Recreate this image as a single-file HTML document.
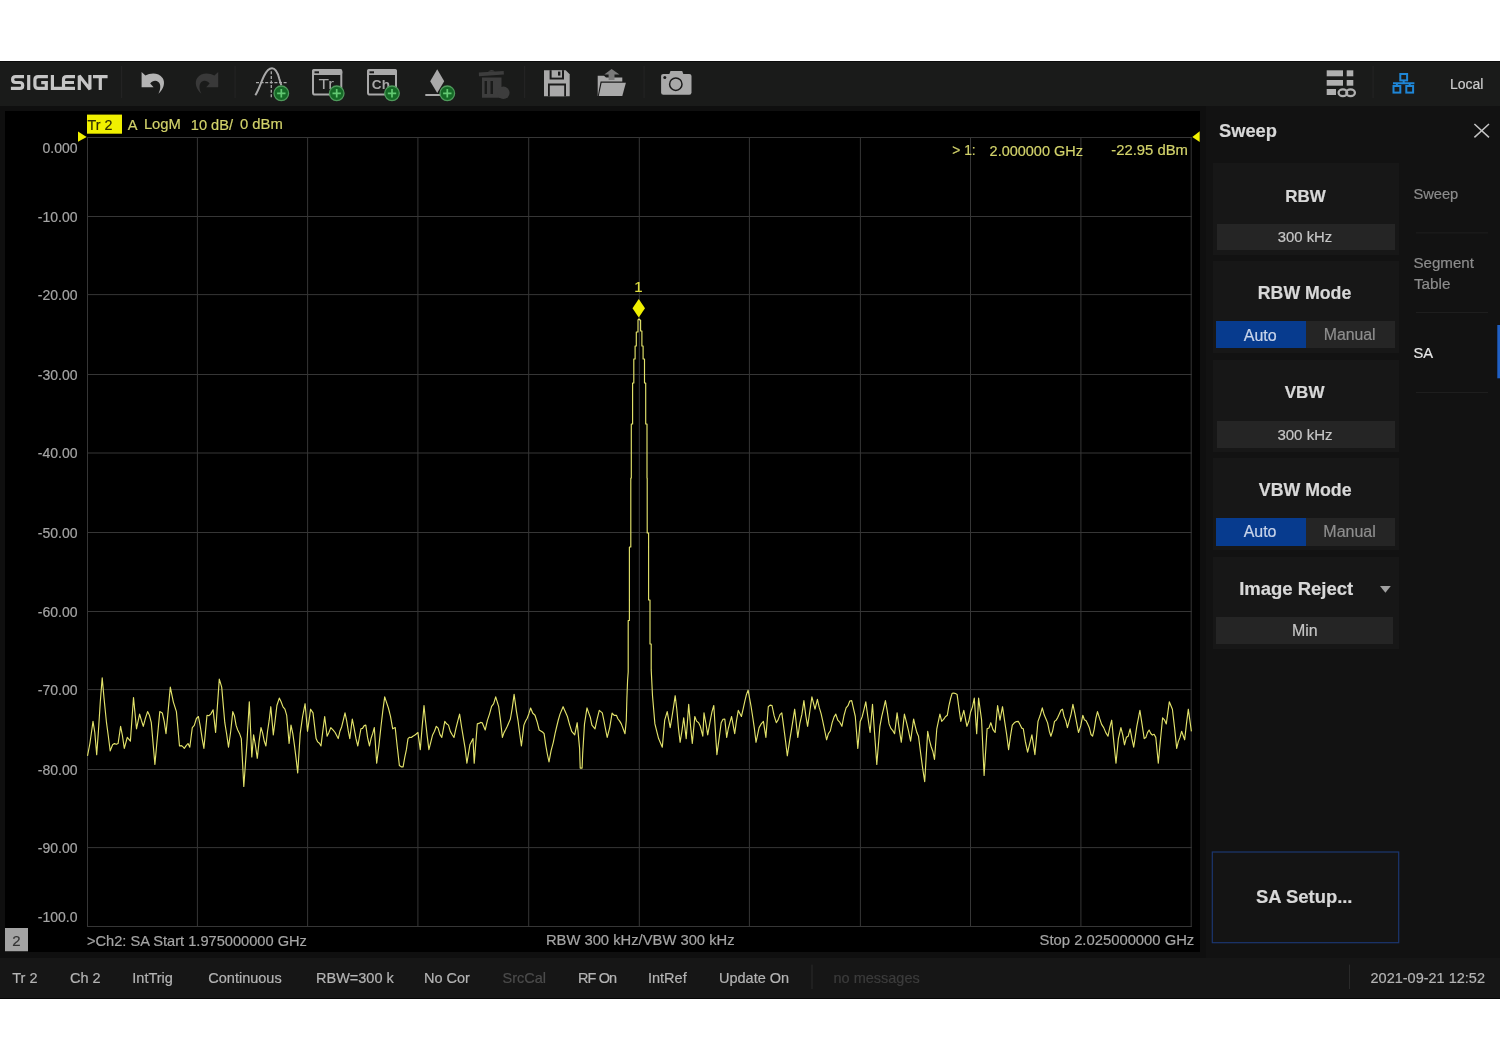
<!DOCTYPE html>
<html><head><meta charset="utf-8"><style>
html,body{margin:0;padding:0;background:#fff;width:1500px;height:1060px;overflow:hidden;position:relative}
.r{position:absolute}
.t{position:absolute;white-space:pre;font-family:"Liberation Sans",sans-serif;-webkit-text-stroke:0.2px currentColor}
svg{position:absolute;left:0;top:0;will-change:transform}
</style></head><body>
<div class="r" style="left:0px;top:61px;width:1500px;height:45px;background:#1a1b1a;"></div>
<div class="r" style="left:0px;top:106px;width:1500px;height:852px;background:#0f0f0f;"></div>
<div class="r" style="left:5px;top:111px;width:1195px;height:841px;background:#000;"></div>
<div class="r" style="left:1206px;top:106px;width:294px;height:852px;background:#121212;"></div>
<div class="r" style="left:0px;top:958px;width:1500px;height:40px;background:#161616;"></div>
<div class="r" style="left:0px;top:61px;width:1500px;height:1px;background:#0b0b0b;"></div>
<div class="r" style="left:0px;top:998px;width:1500px;height:1px;background:#060606;"></div>
<div class="r" style="left:1213px;top:163px;width:186px;height:92px;background:#171717;"></div>
<div class="r" style="left:1213px;top:261px;width:186px;height:92px;background:#171717;"></div>
<div class="r" style="left:1213px;top:359.5px;width:186px;height:92px;background:#171717;"></div>
<div class="r" style="left:1213px;top:458px;width:186px;height:92px;background:#171717;"></div>
<div class="r" style="left:1213px;top:556.6px;width:186px;height:92px;background:#171717;"></div>
<div class="r" style="left:1217px;top:224px;width:177.5px;height:25.5px;background:#252525;"></div>
<div class="r" style="left:1217px;top:421px;width:177.5px;height:27px;background:#252525;"></div>
<div class="r" style="left:1216.3px;top:617px;width:177.2px;height:27px;background:#252525;"></div>
<div class="r" style="left:1216.3px;top:320.6px;width:89.7px;height:27.7px;background:#073b8e;"></div>
<div class="r" style="left:1306px;top:320.6px;width:88.8px;height:27.7px;background:#252525;"></div>
<div class="r" style="left:1216.3px;top:518px;width:89.7px;height:27.7px;background:#073b8e;"></div>
<div class="r" style="left:1306px;top:518px;width:88.8px;height:27.7px;background:#252525;"></div>
<svg width="1500" height="1060" viewBox="0 0 1500 1060">
<rect x="121.0" y="66" width="1.2" height="32" fill="#232323"/>
<rect x="234.5" y="66" width="1.2" height="32" fill="#232323"/>
<rect x="524.0" y="66" width="1.2" height="32" fill="#232323"/>
<rect x="643.5" y="66" width="1.2" height="32" fill="#232323"/>
<rect x="1372.5" y="66" width="1.2" height="32" fill="#232323"/>
<g fill="none" stroke="#c6c6c6" stroke-width="3.2" stroke-linejoin="miter"><path d="M24,76.6 H15.6 Q12.6,76.6 12.6,79.6 Q12.6,82.5 15.6,82.5 H19.8 Q22.7,82.5 22.7,85.4 Q22.7,88.4 19.8,88.4 H10.9"/><path d="M28.7,75 V90"/><path d="M47.9,76.6 H38.2 Q34.9,76.6 34.9,79.8 V85.2 Q34.9,88.4 38.2,88.4 H46.3 V82.6 H41.2"/><path d="M52.4,75 V88.4 H75"/><path d="M75,76.6 H66.6 Q63.5,76.6 63.5,79.6 V88.4 M63.5,82.5 H74"/><path d="M79.3,90 V75.8 L89.9,89.2 V75" stroke-linejoin="bevel"/><path d="M93,76.6 H107.6 M100.3,76.6 V90"/></g>
<path d="M141.6,72 L145.4,75.6 C150.5,72.6 158.8,72.4 162.6,78 C165.6,82.6 163.6,89.4 158.4,93.8 C160.6,89.2 161.2,84.6 158.4,82 C155.8,79.8 152.4,80.6 150.2,83.4 L153.6,87.2 L141.6,87.2 Z" fill="#b4b4b4"/>
<g transform="translate(359.8,0) scale(-1,1)"><path d="M141.6,72 L145.4,75.6 C150.5,72.6 158.8,72.4 162.6,78 C165.6,82.6 163.6,89.4 158.4,93.8 C160.6,89.2 161.2,84.6 158.4,82 C155.8,79.8 152.4,80.6 150.2,83.4 L153.6,87.2 L141.6,87.2 Z" fill="#393939"/></g>
<path d="M255.3,95.3 C259,90 261,82 264,76 C267,70 270,68.3 272,68.3 C275,68.3 277.5,72 279.3,78.7 L281.3,85.3" fill="none" stroke="#a9a9a9" stroke-width="2"/>
<path d="M256,82.7 H287.3" stroke="#a9a9a9" stroke-width="1.3" stroke-dasharray="3,1.6"/>
<path d="M271.3,71.3 V98.7" stroke="#a9a9a9" stroke-width="1.3" stroke-dasharray="3,1.6"/>
<rect x="262" y="61" width="0" height="0"/>
<circle cx="281.3" cy="93.3" r="7.3" fill="#156a26" stroke="#4f9a5c" stroke-width="1.3"/><path d="M277.1,93.3 H285.5 M281.3,89.1 V97.5" stroke="#62c872" stroke-width="1.7"/>
<rect x="313" y="70" width="28.30000000000001" height="24.6" rx="2.2" fill="none" stroke="#a9a9a9" stroke-width="2"/><rect x="312" y="69" width="30.30000000000001" height="6" rx="2" fill="#a9a9a9"/><rect x="314.5" y="71.3" width="4.5" height="2" fill="#1a1a1a"/>
<text x="318.4" y="89.3" font-family="Liberation Sans" font-size="14.5" fill="#a9a9a9" textLength="15.6" lengthAdjust="spacingAndGlyphs">Tr</text>
<circle cx="336.7" cy="93.3" r="7.3" fill="#156a26" stroke="#4f9a5c" stroke-width="1.3"/><path d="M332.5,93.3 H340.9 M336.7,89.1 V97.5" stroke="#62c872" stroke-width="1.7"/>
<rect x="368" y="70" width="28" height="24.6" rx="2.2" fill="none" stroke="#a9a9a9" stroke-width="2"/><rect x="367" y="69" width="30" height="6" rx="2" fill="#a9a9a9"/><rect x="369.5" y="71.3" width="4.5" height="2" fill="#1a1a1a"/>
<text x="371.8" y="88.8" font-family="Liberation Sans" font-size="13.6" font-weight="700" fill="#a9a9a9" textLength="18.2" lengthAdjust="spacingAndGlyphs">Ch</text>
<circle cx="392" cy="93.3" r="7.3" fill="#156a26" stroke="#4f9a5c" stroke-width="1.3"/><path d="M387.8,93.3 H396.2 M392,89.1 V97.5" stroke="#62c872" stroke-width="1.7"/>
<path d="M437.2,69.3 L444.2,81.3 L437.2,93 L430.2,81.3 Z" fill="#a9a9a9"/>
<rect x="425.3" y="94" width="16" height="2" fill="#a9a9a9"/>
<circle cx="447.3" cy="93.3" r="7.3" fill="#156a26" stroke="#4f9a5c" stroke-width="1.3"/><path d="M443.1,93.3 H451.5 M447.3,89.1 V97.5" stroke="#62c872" stroke-width="1.7"/>
<path d="M478.8,72.6 L503.7,71 L503.9,74.6 L479,76.2 Z" fill="#3d3d3d"/>
<path d="M488,71.8 Q491.5,68.2 495,71.4 Z" fill="#3d3d3d"/>
<path d="M482,77.6 H501.5 V97.7 H482 Z M484.6,81 V94 H487 V81 Z M490.5,81 V94 H493 V81 Z" fill="#3d3d3d" fill-rule="evenodd"/>
<circle cx="503.4" cy="92.8" r="6.2" fill="#3d3d3d"/>
<path d="M544,70.2 H565.7 L569.7,74.2 V96.3 H544 Z" fill="#a9a9a9"/>
<rect x="549.6" y="70.2" width="14.4" height="9.3" fill="#1a1a1a"/>
<rect x="551.6" y="70.2" width="10.4" height="7.4" fill="#a9a9a9"/>
<rect x="558" y="71.6" width="2.4" height="4" fill="#1a1a1a"/>
<rect x="548" y="83.5" width="18" height="12.8" fill="#1a1a1a"/>
<rect x="549.8" y="85.5" width="14.4" height="10.8" fill="#a9a9a9"/>
<path d="M597.7,75.7 H604 L606,77.5 H622.3 V96 H597.7 Z" fill="#a9a9a9"/>
<path d="M600.6,81.6 H626.9 L623.3,97 H597.6 Z" fill="#1a1a1a"/>
<path d="M601.6,82.8 H625.9 L622.3,95.9 H598.8 Z" fill="#a9a9a9"/>
<path d="M604.3,74.6 L611.6,69.1 L619.5,74.6 H614.5 V80 H608.6 V74.6 Z" fill="#7a7a7a"/>
<rect x="661.1" y="73.9" width="30.4" height="20.9" rx="2.2" fill="#a9a9a9"/>
<path d="M669.2,74.5 L670.5,71 H682.2 L683.5,74.5 Z" fill="#a9a9a9"/>
<circle cx="664.8" cy="77.6" r="1.5" fill="#1a1a1a"/>
<circle cx="675.8" cy="84.2" r="6.2" fill="none" stroke="#1a1a1a" stroke-width="1.5"/>
<rect x="1326.7" y="70.3" width="16.3" height="6" fill="#b0b0b0"/><rect x="1346.7" y="70.3" width="6.6" height="6" fill="#b0b0b0"/>
<rect x="1326.7" y="80" width="16.3" height="5.7" fill="#b0b0b0"/><rect x="1346.7" y="80" width="6.6" height="5.7" fill="#b0b0b0"/>
<rect x="1326.7" y="89" width="9.3" height="6" fill="#b0b0b0"/>
<ellipse cx="1342.9" cy="92.7" rx="4.3" ry="3.4" fill="none" stroke="#b0b0b0" stroke-width="2.3"/>
<ellipse cx="1350.6" cy="92.7" rx="4.3" ry="3.4" fill="none" stroke="#b0b0b0" stroke-width="2.3"/>
<g fill="none" stroke="#1f86d6" stroke-width="2"><rect x="1400.3" y="74" width="6.8" height="6.4"/><path d="M1403.7,80.4 V83.2 M1393,83.2 H1414.4"/><rect x="1393.5" y="86" width="6.8" height="6.6"/><rect x="1406.3" y="86" width="6.8" height="6.6"/></g>
<path d="M1396.9,83.2 V86 M1409.7,83.2 V86" stroke="#1f86d6" stroke-width="2"/>
<path d="M87.50,137.0 V927.0 M197.40,137.0 V927.0 M307.60,137.0 V927.0 M417.90,137.0 V927.0 M528.70,137.0 V927.0 M639.30,137.0 V927.0 M749.40,137.0 V927.0 M860.40,137.0 V927.0 M970.50,137.0 V927.0 M1080.90,137.0 V927.0 M1191.20,137.0 V927.0 M87.0,137.5 H1191.7 M87.0,216.5 H1191.7 M87.0,294.6 H1191.7 M87.0,374.5 H1191.7 M87.0,453 H1191.7 M87.0,532.5 H1191.7 M87.0,611.5 H1191.7 M87.0,689.6 H1191.7 M87.0,769.5 H1191.7 M87.0,847.6 H1191.7 M87.0,926.5 H1191.7" stroke="#363636" stroke-width="1" fill="none"/>
<path d="M87.5,755.8 L89.9,743.5 L93.0,721.4 L94.8,732.5 L96.7,754.6 L98.5,730.0 L100.3,701.8 L102.2,677.9 L104.0,698.0 L106.5,722.7 L108.3,736.0 L110.2,750.9 L112.6,744.8 L114.4,743.6 L116.3,744.3 L118.1,743.5 L120.6,726.3 L122.4,735.5 L124.3,748.4 L127.3,737.4 L130.4,741.1 L133.5,697.5 L136.5,728.8 L139.6,714.1 L141.4,720.4 L143.3,726.3 L145.4,718.4 L147.6,711.6 L149.4,715.2 L151.3,722.7 L153.1,743.6 L154.9,764.4 L156.8,743.5 L159.8,711.6 L162.3,712.9 L164.2,721.3 L166.0,733.7 L168.2,710.1 L170.3,687.1 L173.3,701.8 L176.4,711.6 L179.5,746.0 L181.1,745.6 L182.7,746.5 L184.3,748.4 L186.2,745.6 L188.0,743.5 L189.8,747.2 L192.3,727.6 L194.3,725.3 L196.4,718.5 L198.4,716.5 L200.2,725.9 L202.1,738.3 L203.9,748.4 L207.0,715.3 L208.8,715.7 L210.7,714.1 L213.1,709.8 L215.6,732.5 L217.4,706.1 L219.3,679.1 L221.7,687.1 L224.8,722.7 L226.7,734.5 L228.5,747.2 L230.7,731.5 L232.8,711.6 L234.4,715.7 L236.1,725.4 L237.7,730.0 L239.5,733.4 L241.3,738.6 L243.8,786.5 L246.9,743.5 L249.3,701.8 L251.8,757.0 L253.6,734.9 L255.4,745.0 L257.3,758.3 L259.1,741.3 L261.0,727.6 L262.6,732.9 L264.3,741.3 L265.9,746.0 L267.5,731.5 L269.2,720.2 L270.8,706.7 L273.3,734.9 L275.1,720.8 L276.9,705.5 L279.3,698.1 L281.1,701.8 L283.0,706.9 L284.9,709.1 L286.7,715.3 L289.1,743.5 L291.0,725.1 L292.8,733.7 L294.4,744.9 L296.1,758.6 L297.7,773.0 L300.2,733.7 L302.6,716.5 L305.1,703.7 L307.5,731.3 L310.6,709.2 L313.0,712.9 L316.1,738.6 L317.7,741.9 L319.4,743.2 L321.0,746.0 L322.9,730.4 L324.7,716.5 L327.1,736.2 L329.0,732.3 L330.8,727.6 L333.0,729.9 L335.1,732.5 L338.2,738.6 L339.9,731.3 L341.6,727.0 L343.3,720.2 L345.0,712.9 L346.6,720.3 L348.2,730.4 L349.8,738.6 L352.3,719.0 L354.1,728.1 L356.0,738.7 L357.8,746.0 L360.9,728.8 L362.5,728.4 L364.2,725.6 L365.8,725.1 L367.6,737.7 L369.5,746.0 L371.1,738.2 L372.7,733.4 L374.3,727.6 L376.7,763.2 L378.9,745.9 L381.0,726.3 L382.9,710.1 L384.7,696.9 L386.5,702.4 L388.4,708.0 L390.5,716.4 L392.7,728.8 L395.2,727.6 L397.3,747.3 L399.4,765.6 L401.2,766.8 L403.1,766.8 L404.7,757.7 L406.4,749.7 L408.0,738.6 L409.6,737.3 L411.3,737.5 L412.9,736.2 L414.6,735.3 L416.2,734.0 L417.9,732.5 L420.3,749.7 L422.1,727.4 L424.0,705.5 L425.6,721.7 L427.3,736.9 L428.9,749.7 L430.8,742.2 L432.6,734.9 L434.5,731.3 L436.3,726.3 L438.1,728.1 L440.0,734.6 L441.8,737.4 L444.8,721.4 L446.6,723.8 L448.5,725.1 L450.3,731.4 L452.2,734.7 L454.0,737.4 L455.9,728.7 L457.7,721.4 L459.6,714.1 L461.5,726.5 L463.3,737.4 L465.1,748.2 L466.9,763.2 L469.9,744.8 L473.0,738.6 L474.2,763.2 L477.3,723.9 L478.9,723.4 L480.6,722.4 L482.2,722.7 L485.2,730.0 L487.4,720.4 L489.5,714.1 L491.6,706.4 L493.6,703.8 L495.7,696.9 L498.7,706.7 L500.5,720.4 L502.4,737.4 L504.0,732.6 L505.7,729.5 L507.3,726.3 L510.4,719.0 L512.2,708.3 L514.1,694.4 L516.5,711.6 L518.1,721.2 L519.8,734.3 L521.4,746.0 L523.9,725.1 L525.6,721.0 L527.2,718.2 L528.9,713.7 L530.6,708.0 L532.8,713.3 L535.0,715.3 L537.1,721.7 L539.2,730.0 L540.8,730.9 L542.5,732.0 L544.1,733.7 L545.7,744.8 L547.4,754.5 L549.0,761.9 L551.1,750.6 L553.3,742.3 L555.0,733.8 L556.6,727.0 L558.3,720.0 L560.0,714.1 L563.1,706.7 L565.2,711.5 L567.4,716.5 L569.5,724.3 L571.7,731.3 L574.7,734.9 L577.2,722.7 L579.6,748.4 L580.2,768.1 L582.1,768.1 L582.7,753.3 L584.5,723.9 L587.0,707.9 L588.6,712.6 L590.3,717.2 L591.9,725.1 L595.0,728.8 L597.1,719.2 L599.3,710.4 L602.3,712.9 L603.9,720.5 L605.6,729.5 L607.2,737.4 L609.7,727.6 L612.1,713.1 L614.2,715.4 L616.4,715.3 L618.0,719.0 L619.7,721.1 L621.3,723.9 L625.0,733.7 L626.3,720.2 L626.9,698.1 L627.6,680.0 L628.2,672.0 L628.2,620.5 L629.4,620.5 L629.4,547.0 L630.8,547.0 L630.8,478.0 L631.3,478.0 L631.3,424.0 L632.6,424.0 L632.6,383.0 L633.8,383.0 L633.8,359.0 L635.1,359.0 L635.1,346.0 L636.3,346.0 L636.3,332.0 L638.0,332.0 L638.0,320.0 L638.9,319.0 L639.8,320.0 L640.6,320.0 L640.6,331.0 L641.9,331.0 L641.9,346.0 L643.1,346.0 L643.1,359.0 L644.5,359.0 L644.5,383.0 L645.7,383.0 L645.7,424.0 L647.0,424.0 L647.0,478.0 L647.2,478.0 L647.2,533.0 L648.6,533.0 L648.6,600.0 L650.0,600.0 L650.0,644.0 L651.2,644.0 L651.2,669.9 L652.5,695.7 L654.9,723.9 L658.6,738.6 L662.3,747.2 L664.7,720.2 L667.2,711.6 L670.2,727.6 L671.9,717.5 L673.5,707.1 L675.2,695.7 L676.8,709.3 L678.5,728.5 L680.1,742.3 L681.9,731.3 L683.7,717.8 L686.2,738.6 L688.7,704.3 L690.5,725.5 L692.3,743.5 L694.8,716.5 L696.6,721.1 L698.5,722.6 L700.3,726.3 L702.8,736.2 L704.0,712.9 L705.9,723.5 L707.7,734.9 L710.1,721.4 L712.0,711.7 L713.8,705.5 L716.9,754.6 L719.0,739.2 L721.2,722.7 L723.0,719.3 L724.8,719.0 L726.7,737.4 L728.3,728.5 L730.0,722.2 L731.6,716.5 L734.7,733.7 L736.5,720.6 L738.3,710.4 L741.4,716.5 L743.1,709.2 L744.8,701.4 L746.4,694.6 L748.1,690.2 L751.1,706.7 L752.7,717.0 L754.4,728.7 L756.0,742.3 L759.1,727.6 L761.2,723.9 L763.4,721.4 L765.9,737.4 L768.3,706.7 L770.1,705.1 L772.0,705.5 L774.1,715.7 L776.3,722.7 L778.1,719.9 L780.0,714.6 L781.8,712.9 L783.6,726.1 L785.5,740.8 L787.3,755.8 L789.5,741.7 L791.6,728.8 L794.7,709.2 L797.8,737.4 L799.8,723.5 L801.9,714.4 L803.9,700.6 L805.8,715.6 L807.6,726.3 L809.8,711.5 L811.9,696.9 L815.0,709.2 L817.4,699.4 L819.2,707.4 L821.1,713.7 L822.9,721.9 L824.8,731.0 L826.6,739.8 L828.4,733.6 L830.3,731.0 L832.1,722.9 L834.0,717.1 L835.8,714.1 L837.8,720.2 L839.9,722.4 L841.9,726.3 L844.0,715.5 L846.1,707.9 L848.0,705.7 L849.8,701.0 L851.7,700.6 L853.5,708.7 L855.3,716.5 L857.8,748.4 L860.2,721.4 L862.1,717.0 L863.9,709.9 L865.8,701.8 L868.0,718.0 L870.1,732.5 L872.5,704.3 L876.8,764.4 L879.9,726.3 L881.7,716.7 L883.6,708.6 L885.4,700.6 L887.2,710.8 L889.1,723.9 L890.9,728.4 L892.8,730.6 L894.6,733.7 L897.1,712.9 L899.2,728.8 L901.3,742.3 L904.4,714.1 L906.5,722.4 L908.5,730.9 L910.6,741.1 L913.6,719.0 L915.2,726.1 L916.9,732.6 L918.5,736.2 L920.6,752.9 L922.6,767.8 L924.7,781.6 L927.7,731.3 L929.4,739.8 L931.1,746.5 L932.8,751.2 L934.5,759.5 L936.8,728.8 L939.9,714.1 L941.7,721.4 L943.6,719.4 L945.4,716.7 L947.3,715.3 L948.9,705.9 L950.6,698.5 L952.2,693.2 L953.8,693.1 L955.5,693.5 L957.1,694.4 L959.0,708.7 L960.8,721.4 L963.8,710.4 L966.9,726.3 L968.8,721.3 L970.6,712.0 L972.4,707.1 L974.3,698.1 L976.7,733.7 L978.6,698.1 L981.6,720.2 L984.1,775.4 L987.1,728.8 L989.0,727.9 L990.8,722.7 L993.0,729.6 L995.1,732.5 L997.6,705.5 L1000.0,720.2 L1002.5,706.7 L1004.5,720.4 L1006.6,734.1 L1008.6,749.7 L1010.5,736.2 L1012.3,725.1 L1014.3,722.8 L1016.4,721.6 L1018.4,721.4 L1020.0,724.4 L1021.7,728.1 L1023.3,728.8 L1025.4,741.9 L1027.6,752.1 L1029.8,743.4 L1031.9,734.9 L1034.9,754.6 L1038.0,721.4 L1040.2,715.3 L1042.3,707.9 L1044.2,714.8 L1046.0,719.0 L1047.6,722.9 L1049.3,731.2 L1050.9,736.2 L1052.7,730.6 L1054.5,721.4 L1056.1,720.2 L1057.7,717.6 L1059.3,714.0 L1060.9,710.2 L1062.5,709.2 L1064.1,716.6 L1065.8,720.7 L1067.4,727.6 L1069.2,721.2 L1071.1,714.1 L1072.9,704.3 L1074.8,713.2 L1076.6,722.7 L1078.5,732.5 L1080.7,725.9 L1082.8,715.3 L1084.4,719.8 L1086.1,720.8 L1087.7,724.1 L1089.3,727.7 L1091.0,734.5 L1092.6,736.2 L1094.2,729.3 L1095.9,718.2 L1097.5,711.6 L1099.6,718.4 L1101.6,724.4 L1103.7,727.6 L1105.8,732.6 L1108.0,736.2 L1109.8,727.5 L1111.7,720.2 L1113.8,741.9 L1116.0,763.2 L1118.4,738.6 L1120.9,727.6 L1122.7,734.6 L1124.5,744.8 L1126.4,737.3 L1128.2,736.2 L1130.1,728.8 L1131.9,738.7 L1133.7,747.2 L1136.8,726.3 L1139.9,710.4 L1142.1,724.6 L1144.2,738.6 L1145.8,737.6 L1147.5,732.6 L1149.1,730.0 L1150.8,733.5 L1152.4,735.1 L1154.1,734.3 L1155.8,737.4 L1158.3,763.2 L1160.1,743.5 L1162.6,717.8 L1164.4,719.8 L1166.3,723.9 L1169.3,701.8 L1172.4,709.2 L1174.6,727.9 L1176.7,748.4 L1178.3,741.6 L1180.0,737.4 L1181.6,731.3 L1184.7,739.8 L1186.5,723.4 L1188.3,709.2 L1191.4,731.3" fill="none" stroke="#e2e26a" stroke-width="1.15" stroke-linejoin="round"/>
<path d="M78,131.5 L86.7,137 L78,141.7 Z" fill="#f0f000"/>
<path d="M1199.7,131.3 L1192.3,137 L1199.7,142 Z" fill="#f0f000"/>
<path d="M638.75,299 L645,308.2 L638.75,317.4 L632.5,308.2 Z" fill="#f0f000"/>
<rect x="87" y="114.6" width="35" height="19.1" fill="#f0f000"/>
<rect x="5" y="928" width="23" height="23.3" fill="#a3a3a3"/>
<path d="M1474.4,124 L1489,137.4 M1489,124 L1474.4,137.4" stroke="#c4c4c4" stroke-width="1.5"/>
<path d="M1380,586 H1390.8 L1385.4,592.8 Z" fill="#a0a0a0"/>
<rect x="811.5" y="964.6" width="1" height="24.4" fill="#2a2a2a"/>
<rect x="1349" y="964.6" width="1" height="24.4" fill="#2a2a2a"/>
<rect x="1416" y="232.4" width="72" height="1" fill="#1e1e1e"/>
<rect x="1416" y="312" width="72" height="1" fill="#1e1e1e"/>
<rect x="1416" y="392" width="72" height="1" fill="#1e1e1e"/>
<rect x="1497.3" y="325" width="2.7" height="53.3" fill="#1f5fc4"/>
<rect x="1212.3" y="852" width="186.4" height="90.7" fill="#141414" stroke="#1c3770" stroke-width="1.2"/>
</svg>
<div id="tl" style="position:absolute;left:0;top:0;width:1500px;height:1060px;will-change:transform"><div class="t" style="left:1450.00px;top:77.35px;font-size:14.000px;line-height:14.000px;color:#cccccc;font-weight:400;">Local</div>
<div class="t" style="left:42.47px;top:140.65px;font-size:14.000px;line-height:14.000px;color:#a4a4a4;font-weight:400;">0.000</div>
<div class="t" style="left:37.81px;top:209.55px;font-size:14.000px;line-height:14.000px;color:#a4a4a4;font-weight:400;">-10.00</div>
<div class="t" style="left:37.81px;top:287.65px;font-size:14.000px;line-height:14.000px;color:#a4a4a4;font-weight:400;">-20.00</div>
<div class="t" style="left:37.81px;top:367.55px;font-size:14.000px;line-height:14.000px;color:#a4a4a4;font-weight:400;">-30.00</div>
<div class="t" style="left:37.81px;top:446.05px;font-size:14.000px;line-height:14.000px;color:#a4a4a4;font-weight:400;">-40.00</div>
<div class="t" style="left:37.81px;top:525.55px;font-size:14.000px;line-height:14.000px;color:#a4a4a4;font-weight:400;">-50.00</div>
<div class="t" style="left:37.81px;top:604.55px;font-size:14.000px;line-height:14.000px;color:#a4a4a4;font-weight:400;">-60.00</div>
<div class="t" style="left:37.81px;top:682.65px;font-size:14.000px;line-height:14.000px;color:#a4a4a4;font-weight:400;">-70.00</div>
<div class="t" style="left:37.81px;top:762.55px;font-size:14.000px;line-height:14.000px;color:#a4a4a4;font-weight:400;">-80.00</div>
<div class="t" style="left:37.81px;top:840.65px;font-size:14.000px;line-height:14.000px;color:#a4a4a4;font-weight:400;">-90.00</div>
<div class="t" style="left:37.81px;top:910.15px;font-size:14.000px;line-height:14.000px;color:#a4a4a4;font-weight:400;">-100.0</div>
<div class="t" style="left:87.50px;top:117.89px;font-size:14.302px;line-height:14.302px;color:#2e2e00;font-weight:400;">Tr 2</div>
<div class="t" style="left:127.80px;top:117.64px;font-size:14.600px;line-height:14.600px;color:#d2d26a;font-weight:400;">A</div>
<div class="t" style="left:143.90px;top:117.47px;font-size:14.800px;line-height:14.800px;color:#d2d26a;font-weight:400;">LogM</div>
<div class="t" style="left:190.80px;top:117.64px;font-size:14.600px;line-height:14.600px;color:#d2d26a;font-weight:400;">10 dB/</div>
<div class="t" style="left:240.00px;top:117.47px;font-size:14.800px;line-height:14.800px;color:#d2d26a;font-weight:400;">0 dBm</div>
<div class="t" style="left:952.30px;top:144.22px;font-size:13.797px;line-height:13.797px;color:#d2d26a;font-weight:400;">&gt; 1:</div>
<div class="t" style="left:989.60px;top:143.64px;font-size:14.483px;line-height:14.483px;color:#d2d26a;font-weight:400;">2.000000 GHz</div>
<div class="t" style="left:1111.20px;top:143.32px;font-size:14.858px;line-height:14.858px;color:#d2d26a;font-weight:400;">-22.95 dBm</div>
<div class="t" style="left:634.33px;top:279.00px;font-size:15.000px;line-height:15.000px;color:#dede40;font-weight:400;">1</div>
<div class="t" style="left:87.00px;top:933.62px;font-size:14.630px;line-height:14.630px;color:#a4a4a4;font-weight:400;">&gt;Ch2: SA Start 1.975000000 GHz</div>
<div class="t" style="left:545.90px;top:933.49px;font-size:14.780px;line-height:14.780px;color:#a4a4a4;font-weight:400;">RBW 300 kHz/VBW 300 kHz</div>
<div class="t" style="left:1039.60px;top:933.07px;font-size:14.801px;line-height:14.801px;color:#a4a4a4;font-weight:400;">Stop 2.025000000 GHz</div>
<div class="t" style="left:12.33px;top:933.30px;font-size:15.000px;line-height:15.000px;color:#333333;font-weight:400;">2</div>
<div class="t" style="left:12.30px;top:971.03px;font-size:14.500px;line-height:14.500px;color:#b4b4b4;font-weight:400;">Tr 2</div>
<div class="t" style="left:70.00px;top:971.03px;font-size:14.500px;line-height:14.500px;color:#b4b4b4;font-weight:400;">Ch 2</div>
<div class="t" style="left:132.30px;top:971.03px;font-size:14.500px;line-height:14.500px;color:#b4b4b4;font-weight:400;">IntTrig</div>
<div class="t" style="left:208.30px;top:971.03px;font-size:14.500px;line-height:14.500px;color:#b4b4b4;font-weight:400;">Continuous</div>
<div class="t" style="left:316.00px;top:971.03px;font-size:14.500px;line-height:14.500px;color:#b4b4b4;font-weight:400;">RBW=300 k</div>
<div class="t" style="left:424.00px;top:971.03px;font-size:14.500px;line-height:14.500px;color:#b4b4b4;font-weight:400;">No Cor</div>
<div class="t" style="left:502.50px;top:971.03px;font-size:14.500px;line-height:14.500px;color:#4c4c4c;font-weight:400;">SrcCal</div>
<div class="t" style="left:578.00px;top:971.03px;font-size:14.500px;line-height:14.500px;color:#b4b4b4;font-weight:400;letter-spacing:-0.9px;">RF On</div>
<div class="t" style="left:648.00px;top:971.03px;font-size:14.500px;line-height:14.500px;color:#b4b4b4;font-weight:400;">IntRef</div>
<div class="t" style="left:719.00px;top:971.03px;font-size:14.500px;line-height:14.500px;color:#b4b4b4;font-weight:400;">Update On</div>
<div class="t" style="left:833.50px;top:971.03px;font-size:14.500px;line-height:14.500px;color:#3c3c3c;font-weight:400;">no messages</div>
<div class="t" style="left:1370.50px;top:971.03px;font-size:14.500px;line-height:14.500px;color:#b4b4b4;font-weight:400;">2021-09-21 12:52</div>
<div class="t" style="left:1219.00px;top:121.50px;font-size:18.308px;line-height:18.308px;color:#d8d8d8;font-weight:700;">Sweep</div>
<div class="t" style="left:1285.20px;top:187.61px;font-size:17.000px;line-height:17.000px;color:#d8d8d8;font-weight:700;">RBW</div>
<div class="t" style="left:1277.75px;top:229.92px;font-size:14.858px;line-height:14.858px;color:#c6c6c6;font-weight:400;">300 kHz</div>
<div class="t" style="left:1257.80px;top:284.79px;font-size:17.737px;line-height:17.737px;color:#d8d8d8;font-weight:700;">RBW Mode</div>
<div class="t" style="left:1243.70px;top:327.02px;font-size:16.043px;line-height:16.043px;color:#c8d4ea;font-weight:400;">Auto</div>
<div class="t" style="left:1323.75px;top:327.21px;font-size:15.823px;line-height:15.823px;color:#8e8e8e;font-weight:400;">Manual</div>
<div class="t" style="left:1284.77px;top:384.31px;font-size:17.000px;line-height:17.000px;color:#d8d8d8;font-weight:700;">VBW</div>
<div class="t" style="left:1277.40px;top:426.96px;font-size:15.049px;line-height:15.049px;color:#c6c6c6;font-weight:400;">300 kHz</div>
<div class="t" style="left:1258.85px;top:481.87px;font-size:17.752px;line-height:17.752px;color:#d8d8d8;font-weight:700;">VBW Mode</div>
<div class="t" style="left:1243.70px;top:524.30px;font-size:15.946px;line-height:15.946px;color:#c8d4ea;font-weight:400;">Auto</div>
<div class="t" style="left:1323.35px;top:524.25px;font-size:16.006px;line-height:16.006px;color:#8e8e8e;font-weight:400;">Manual</div>
<div class="t" style="left:1239.20px;top:580.34px;font-size:18.496px;line-height:18.496px;color:#d8d8d8;font-weight:700;">Image Reject</div>
<div class="t" style="left:1291.95px;top:623.20px;font-size:15.953px;line-height:15.953px;color:#c6c6c6;font-weight:400;">Min</div>
<div class="t" style="left:1413.40px;top:187.07px;font-size:14.683px;line-height:14.683px;color:#8c8c8c;font-weight:400;">Sweep</div>
<div class="t" style="left:1413.40px;top:255.18px;font-size:15.142px;line-height:15.142px;color:#8c8c8c;font-weight:400;">Segment</div>
<div class="t" style="left:1414.00px;top:276.08px;font-size:15.266px;line-height:15.266px;color:#8c8c8c;font-weight:400;">Table</div>
<div class="t" style="left:1413.40px;top:346.26px;font-size:14.693px;line-height:14.693px;color:#e6e6e6;font-weight:400;">SA</div>
<div class="t" style="left:1256.00px;top:888.41px;font-size:18.413px;line-height:18.413px;color:#d8d8d8;font-weight:700;">SA Setup...</div></div>
</body></html>
